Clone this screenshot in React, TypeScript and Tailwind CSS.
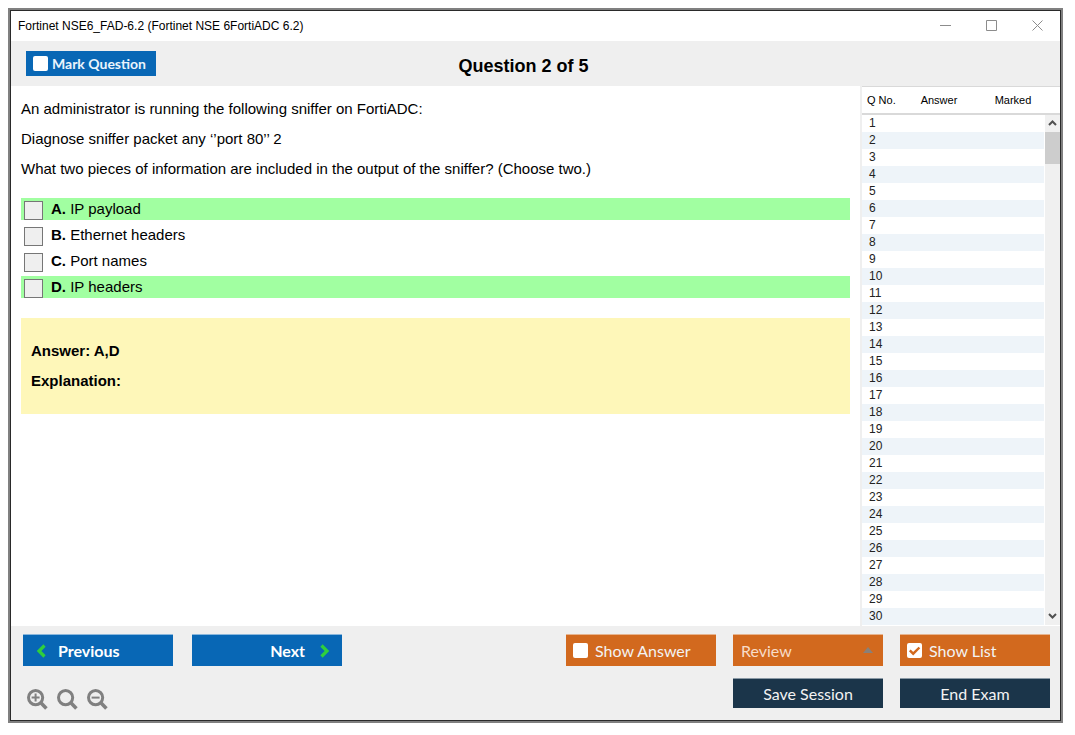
import { useState } from "react";
import type { ReactNode } from "react";

const paragraphs = [
  "An administrator is running the following sniffer on FortiADC:",
  "Diagnose sniffer packet any ‘’port 80’’ 2",
  "What two pieces of information are included in the output of the sniffer? (Choose two.)",
];

const options = [
  { letter: "A", text: "IP payload", correct: true },
  { letter: "B", text: "Ethernet headers", correct: false },
  { letter: "C", text: "Port names", correct: false },
  { letter: "D", text: "IP headers", correct: true },
];

const questionNumbers = Array.from({ length: 30 }, (_, i) => i + 1);

function Tick({ label, className, checked = false }: { label: string; className: string; checked?: boolean }) {
  const [on, setOn] = useState(checked);
  return (
    <label className={"flex items-center " + className}>
      <span className="relative flex">
        <input
          type="checkbox"
          checked={on}
          onChange={() => setOn(!on)}
          className="size-[15px] appearance-none rounded-xs bg-white"
        />
        {on && (
          <svg viewBox="0 0 15 15" className="pointer-events-none absolute inset-0 size-[15px]">
            <path d="M2.8 7.3 6.2 10.7 12.4 4.5" fill="none" stroke="#d2691e" strokeWidth="2.4" />
          </svg>
        )}
      </span>
      {label}
    </label>
  );
}

function Chevron({ d }: { d: string }) {
  return (
    <svg viewBox="0 0 10 14" className="h-[14px] w-[10px]" aria-hidden="true">
      <path d={d} fill="none" stroke="#2fcf3c" strokeWidth="3.2" />
    </svg>
  );
}

function WindowButton({ label, children }: { label: string; children: ReactNode }) {
  return (
    <button type="button" aria-label={label} className="flex w-[46px] items-center justify-center">
      <svg viewBox="0 0 11 11" className="size-[11px]" fill="none" stroke="#8c8c8c" strokeWidth="1">
        {children}
      </svg>
    </button>
  );
}

function ZoomButton({ label, sign }: { label: string; sign?: string }) {
  return (
    <button type="button" aria-label={label}>
      <svg viewBox="0 0 21 21" className="size-[21px]" fill="none" stroke="#808080">
        <circle cx="8.6" cy="8.6" r="7.1" strokeWidth="3" />
        <path d="M13.6 13.6 19.4 19.4" strokeWidth="3.6" />
        {sign && <path d={sign} strokeWidth="2" />}
      </svg>
    </button>
  );
}

function ScrollArrow({ label, d }: { label: string; d: string }) {
  return (
    <button type="button" aria-label={label} className="flex h-[17px] w-full items-center justify-center">
      <svg viewBox="0 0 9 6" className="h-[6px] w-[9px]">
        <path d={d} fill="none" stroke="#505050" strokeWidth="2" />
      </svg>
    </button>
  );
}

function QuestionList() {
  return (
    <aside className="w-[200px] shrink-0 border-l-2 border-[#efefef] bg-white text-[#222]">
      <table className="w-full table-fixed border-collapse">
        <thead>
          <tr className="h-[27px] border-t border-b-2 border-[#d9d9d9] text-[11px] text-black">
            <th className="w-[42px] p-0 pl-[5px] text-left font-normal">Q No.</th>
            <th className="w-[70px] p-0 text-center font-normal">Answer</th>
            <th className="p-0 pl-2 text-center font-normal">Marked</th>
            <th className="w-4 p-0" aria-label="Scroll" />
          </tr>
        </thead>
        <tbody className="text-xs leading-[17px]">
          {questionNumbers.map((n) => (
            <tr key={n} className="h-[17px]">
              <td className={"p-0 pl-[7px] " + (n % 2 ? "bg-white" : "bg-[#eef4f9]")}>{n}</td>
              <td className={"p-0 " + (n % 2 ? "bg-white" : "bg-[#eef4f9]")} />
              <td className={"p-0 " + (n % 2 ? "bg-white" : "bg-[#eef4f9]")} />
              {n === 1 && (
                <td rowSpan={30} className="h-px border-l border-white bg-[#f0f0f0] p-0">
                  <div className="flex h-full flex-col">
                    <ScrollArrow label="Scroll up" d="M1 5 4.5 1.5 8 5" />
                    <div className="grow">
                      <div className="h-8 bg-[#cdcdcd]" />
                    </div>
                    <ScrollArrow label="Scroll down" d="M1 1 4.5 4.5 8 1" />
                  </div>
                </td>
              )}
            </tr>
          ))}
        </tbody>
      </table>
    </aside>
  );
}

export default function App() {
  return (
    <div className="flex min-h-screen bg-white pt-2 pr-3 pb-3 pl-2 font-['Liberation_Sans',sans-serif] text-black">
      <div className="flex grow border-2 border-[#808080]">
        <div className="flex grow flex-col border border-[#2a2a2a] bg-[#efefef]">
          <div className="flex h-[30px] justify-between bg-white">
            <h1 className="self-center pl-[7px] text-xs">Fortinet NSE6_FAD-6.2 (Fortinet NSE 6FortiADC 6.2)</h1>
            <div className="flex pb-[2px]">
              <WindowButton label="Minimize">
                <path d="M0 5.5h11" />
              </WindowButton>
              <WindowButton label="Maximize">
                <path d="M.5.5h10v10H.5z" />
              </WindowButton>
              <WindowButton label="Close">
                <path d="M.5.5l10 10M10.5.5l-10 10" />
              </WindowButton>
            </div>
          </div>

          <header className="grid h-[45px] grid-cols-[1fr_auto_1fr] items-center px-[15px]">
            <Tick
              label="Mark Question"
              className="h-[25px] w-[130px] gap-1 bg-[#0867b5] pl-[7px] font-['Lato',sans-serif] text-sm font-bold text-[#eaf4fc]"
            />
            <h2 className="pt-1 pr-6 text-lg font-bold">Question 2 of 5</h2>
          </header>

          <div className="flex grow">
            <main className="grow bg-white px-[10px] pt-[13px] text-[15px] leading-5">
              <div className="flex flex-col gap-[10px]">
                {paragraphs.map((p) => (
                  <p key={p}>{p}</p>
                ))}
              </div>
              <div className="mt-[19px] flex flex-col gap-1">
                {options.map((o) => (
                  <label
                    key={o.letter}
                    className={"flex h-[22px] items-center gap-2 pl-[3px] " + (o.correct ? "bg-[#a1ffa1]" : "bg-white")}
                  >
                    <input
                      type="checkbox"
                      className="size-[19px] appearance-none self-end border border-[#767676] bg-[#efefef] checked:bg-[#767676]"
                    />
                    <span>
                      <b>{o.letter}.</b> {o.text}
                    </span>
                  </label>
                ))}
              </div>
              <section className="mt-5 flex flex-col gap-[10px] bg-[#fef7b9] px-[10px] py-[23px] font-bold">
                <p>Answer: A,D</p>
                <p>Explanation:</p>
              </section>
            </main>
            <QuestionList />
          </div>

          <footer className="flex justify-between pt-2 pr-[10px] pb-[10px] pl-3 font-['Lato',sans-serif] text-base text-[#f3f3f3]">
            <div className="flex flex-col gap-[23px]">
              <div className="flex gap-[19px] font-bold text-white">
                <button
                  type="button"
                  className="flex h-8 w-[150px] items-center gap-3 border-t border-[#8ab7dc] bg-[#0867b5] px-[13px]"
                >
                  <Chevron d="M8.5 1.5 3 7l5.5 5.5" />
                  Previous
                </button>
                <button
                  type="button"
                  className="flex h-8 w-[150px] items-center justify-end gap-[15px] border-t border-[#8ab7dc] bg-[#0867b5] px-3"
                >
                  Next
                  <Chevron d="M1.5 1.5 7 7l-5.5 5.5" />
                </button>
              </div>
              <div className="flex gap-[9px] pl-1">
                <ZoomButton label="Zoom in" sign="M4.6 8.6h8M8.6 4.6v8" />
                <ZoomButton label="Reset zoom" />
                <ZoomButton label="Zoom out" sign="M4.6 8.6h8" />
              </div>
            </div>

            <div className="grid grid-cols-[repeat(3,150px)] content-start gap-x-[17px] gap-y-3">
              <Tick label="Show Answer" className="h-8 gap-[7px] border-t border-[#e6b48f] bg-[#d2691e] pl-[7px]" />
              <div className="relative">
                <select
                  aria-label="Review"
                  className="h-8 w-full appearance-none border-t border-[#e6b48f] bg-[#d2691e] pl-2 text-[#f8dcc8]"
                >
                  <option>Review</option>
                </select>
                <svg viewBox="0 0 10 6" className="pointer-events-none absolute top-[13px] right-[10px] h-[6px] w-[10px]">
                  <path d="M0 6 5 0l5 6z" fill="#8a8078" />
                </svg>
              </div>
              <Tick label="Show List" checked className="h-8 gap-[7px] border-t border-[#e6b48f] bg-[#d2691e] pl-[7px]" />
              <button type="button" className="col-start-2 h-[30px] border-t border-[#8a99a5] bg-[#1b354a]">
                Save Session
              </button>
              <button type="button" className="h-[30px] border-t border-[#8a99a5] bg-[#1b354a]">
                End Exam
              </button>
            </div>
          </footer>
        </div>
      </div>
    </div>
  );
}
